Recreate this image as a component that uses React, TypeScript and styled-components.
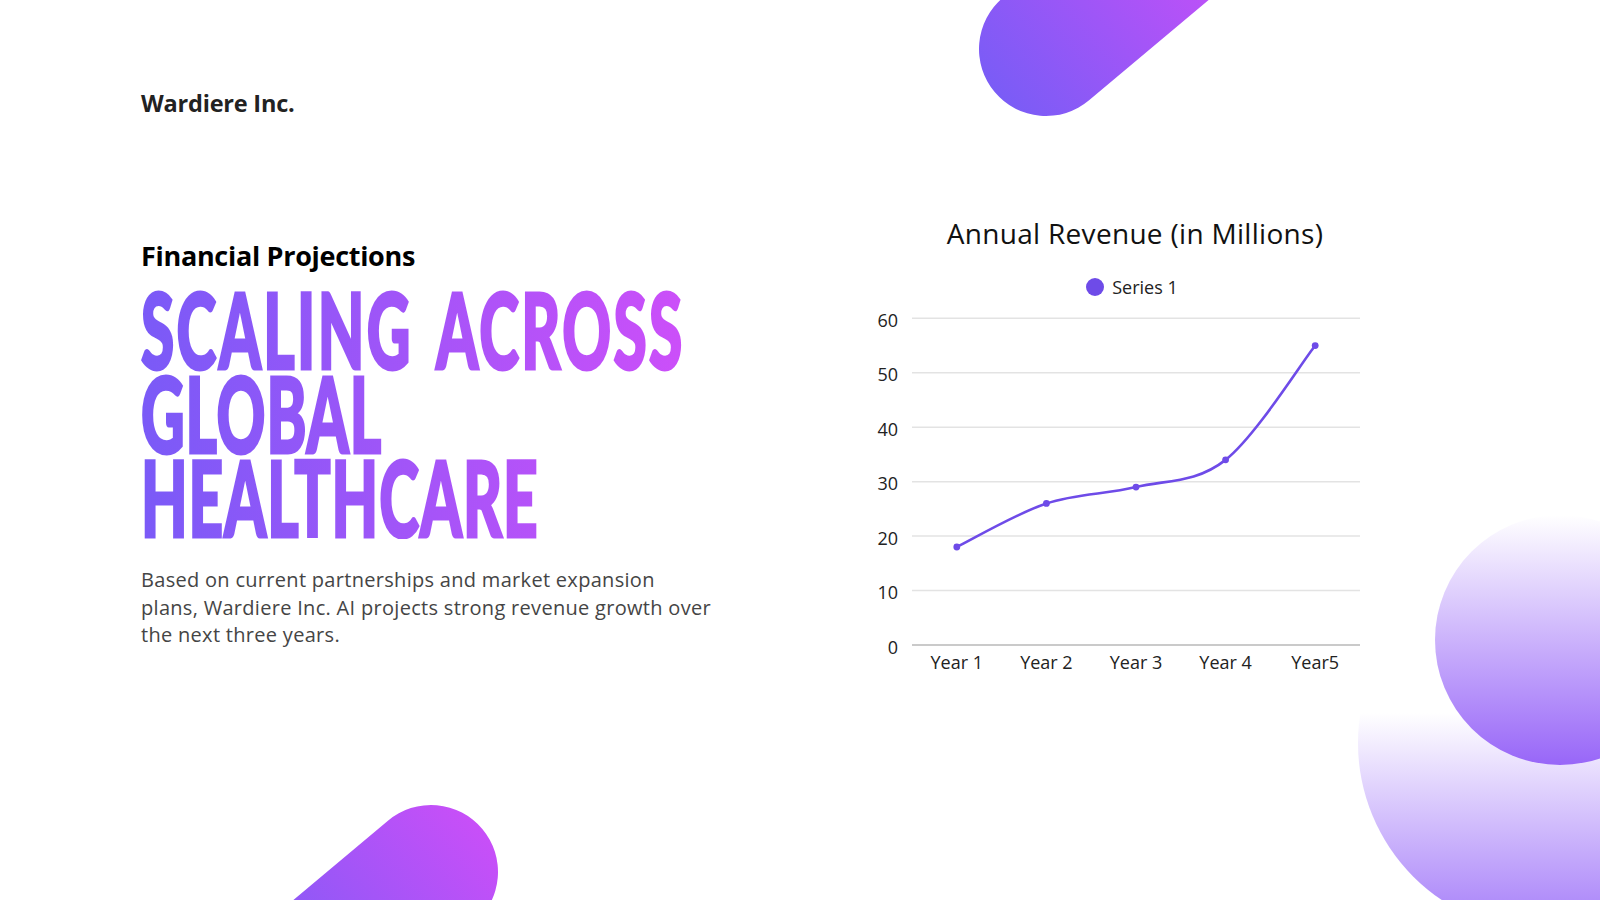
import React from 'react';
import styled, { createGlobalStyle } from 'styled-components';

const revenue = [18, 26, 29, 34, 55];
const years = ['Year 1', 'Year 2', 'Year 3', 'Year 4', 'Year5'];
const ticks = [0, 10, 20, 30, 40, 50, 60];

const headline = [
  { text: 'SCALING ACROSS', tracking: 4 },
  { text: 'GLOBAL', tracking: 1.5 },
  { text: 'HEALTHCARE', tracking: 1.5 },
];

// plot area inside the chart svg
const plot = { x0: 52, x1: 500, top: 18.3, zero: 345, max: 60 };
const step = (plot.x1 - plot.x0) / years.length;
const xAt = (i: number) => plot.x0 + step * (i + 0.5);
const yAt = (v: number) => plot.zero - (v / plot.max) * (plot.zero - plot.top);

type Pt = { x: number; y: number };

const smoothPath = (pts: Pt[]) => {
  let d = `M${pts[0].x},${pts[0].y}`;
  for (let i = 0; i < pts.length - 1; i++) {
    const p0 = pts[i - 1] || pts[i];
    const p1 = pts[i];
    const p2 = pts[i + 1];
    const p3 = pts[i + 2] || p2;
    const c1x = p1.x + (p2.x - p0.x) / 6;
    const c1y = p1.y + (p2.y - p0.y) / 6;
    const c2x = p2.x - (p3.x - p1.x) / 6;
    const c2y = p2.y - (p3.y - p1.y) / 6;
    d += ` C${c1x},${c1y} ${c2x},${c2y} ${p2.x},${p2.y}`;
  }
  return d;
};

const App: React.FC = () => {
  const points = revenue.map((v, i) => ({ x: xAt(i), y: yAt(v) }));

  return (
    <Slide>
      <GlobalStyle />
      <Orb $cx={1547} $cy={743} $r={189} $fade={42} $color="#a47bf9" />
      <Orb $cx={1560} $cy={640} $r={125} $fade={0} $color="#9866f8" />
      <Pill $cx={1046} $cy={49} $angle={-40} $from="#7a5cf6" $to="#c84ff8" />
      <Pill $cx={431} $cy={872} $angle={140} $from="#c84ff8" $to="#7a5cf6" />

      <LeftColumn>
        <Brand>Wardiere Inc.</Brand>
        <Kicker>Financial Projections</Kicker>
        <HeadlineWrap>
          <Headline>
            {headline.map((l) => (
              <HeadlineLine key={l.text} $tracking={l.tracking}>
                {l.text}
              </HeadlineLine>
            ))}
          </Headline>
        </HeadlineWrap>
        <Lead>
          Based on current partnerships and market expansion
          <br />
          plans, Wardiere Inc. AI projects strong revenue growth over
          <br />
          the next three years.
        </Lead>
      </LeftColumn>

      <ChartColumn>
        <ChartTitle>Annual Revenue (in Millions)</ChartTitle>
        <Legend>
          <LegendDot />
          <LegendLabel>Series 1</LegendLabel>
        </Legend>
        <ChartSvg width={510} height={380} viewBox="0 0 510 380">
          {ticks.map((t) => (
            <g key={t}>
              <line
                x1={plot.x0}
                x2={plot.x1}
                y1={yAt(t)}
                y2={yAt(t)}
                stroke={t === 0 ? '#b8b8b8' : '#e3e3e3'}
                strokeWidth={1.5}
              />
              <AxisText x={38} y={yAt(t) + 1.5} textAnchor="end" dominantBaseline="central">
                {t}
              </AxisText>
            </g>
          ))}
          {years.map((y, i) => (
            <AxisText key={y} x={xAt(i)} y={362} textAnchor="middle" dominantBaseline="central">
              {y}
            </AxisText>
          ))}
          <path d={smoothPath(points)} fill="none" stroke="#6e4be8" strokeWidth={2.6} strokeLinecap="round" />
          {points.map((p, i) => (
            <circle key={i} cx={p.x} cy={p.y} r={3.4} fill="#6e4be8" />
          ))}
        </ChartSvg>
      </ChartColumn>
    </Slide>
  );
};

export default App;

const GlobalStyle = createGlobalStyle`
  html, body {
    margin: 0;
    padding: 0;
    background: #ffffff;
    overflow: hidden;
  }
  body {
    font-family: 'Open Sans', 'Liberation Sans', sans-serif;
  }
`;

const Slide = styled.div`
  position: relative;
  width: 1600px;
  height: 900px;
  overflow: hidden;
  background: #ffffff;
  display: grid;
  grid-template-columns: 860px 510px;
  align-items: start;
`;

const Pill = styled.div<{ $cx: number; $cy: number; $angle: number; $from: string; $to: string }>`
  position: absolute;
  left: ${(p) => p.$cx - 67}px;
  top: ${(p) => p.$cy - 67}px;
  width: 440px;
  height: 134px;
  border-radius: 67px;
  transform-origin: 67px 67px;
  transform: rotate(${(p) => p.$angle}deg);
  background: linear-gradient(to right, ${(p) => p.$from} 0px, ${(p) => p.$to} 270px);
`;

const Orb = styled.div<{ $cx: number; $cy: number; $r: number; $fade: number; $color: string }>`
  position: absolute;
  left: ${(p) => p.$cx - p.$r}px;
  top: ${(p) => p.$cy - p.$r}px;
  width: ${(p) => p.$r * 2}px;
  height: ${(p) => p.$r * 2}px;
  border-radius: 50%;
  background: linear-gradient(to bottom, #ffffff ${(p) => p.$fade}%, ${(p) => p.$color} 100%);
`;

const LeftColumn = styled.div`
  position: relative;
  z-index: 1;
  display: flex;
  flex-direction: column;
  align-items: flex-start;
  padding: 89px 0 0 141px;
`;

const Brand = styled.div`
  font-family: 'Open Sans', sans-serif;
  font-weight: 700;
  font-size: 23.5px;
  line-height: 28px;
  color: #222222;
  letter-spacing: -0.2px;
`;

const Kicker = styled.h2`
  margin: 123px 0 0;
  font-family: 'Open Sans', sans-serif;
  font-weight: 700;
  font-size: 27px;
  line-height: 31px;
  color: #000000;
  letter-spacing: -0.3px;
`;

const HeadlineWrap = styled.div`
  margin-top: 16px;
  height: 252px;
`;

const Headline = styled.h1`
  margin: 0;
  display: inline-block;
  width: max-content;
  font-family: 'Lato', 'Liberation Sans', sans-serif;
  font-weight: 900;
  font-size: 104px;
  line-height: 84px;
  transform: scaleX(0.58);
  transform-origin: left top;
  background: linear-gradient(to right, #7a5af7 0%, #cc4ff9 100%);
  -webkit-background-clip: text;
  background-clip: text;
  -webkit-text-fill-color: transparent;
  -webkit-text-stroke: 3px transparent;
  color: transparent;
`;

const HeadlineLine = styled.span<{ $tracking: number }>`
  display: block;
  letter-spacing: ${(p) => p.$tracking}px;
  word-spacing: 15px;
`;

const Lead = styled.p`
  margin: 27px 0 0;
  font-family: 'Open Sans', sans-serif;
  font-size: 20px;
  line-height: 27.6px;
  letter-spacing: 0.3px;
  color: #454545;
  white-space: nowrap;
`;

const ChartColumn = styled.div`
  position: relative;
  z-index: 1;
  display: flex;
  flex-direction: column;
  padding-top: 217px;
`;

const ChartTitle = styled.div`
  padding-left: 40px;
  text-align: center;
  font-family: 'Open Sans', sans-serif;
  font-size: 28px;
  line-height: 32px;
  letter-spacing: 0.3px;
  color: #111111;
`;

const Legend = styled.div`
  margin-top: 28px;
  padding-left: 34px;
  display: flex;
  align-items: center;
  justify-content: center;
  gap: 8px;
  height: 20px;
`;

const LegendDot = styled.span`
  width: 18px;
  height: 18px;
  border-radius: 50%;
  background: #6e4be8;
`;

const LegendLabel = styled.span`
  font-family: 'Open Sans', sans-serif;
  font-size: 18px;
  color: #222222;
`;

const ChartSvg = styled.svg`
  display: block;
  margin-top: 3px;
  overflow: visible;
`;

const AxisText = styled.text`
  font-family: 'Open Sans', sans-serif;
  font-size: 18px;
  fill: #222222;
`;
